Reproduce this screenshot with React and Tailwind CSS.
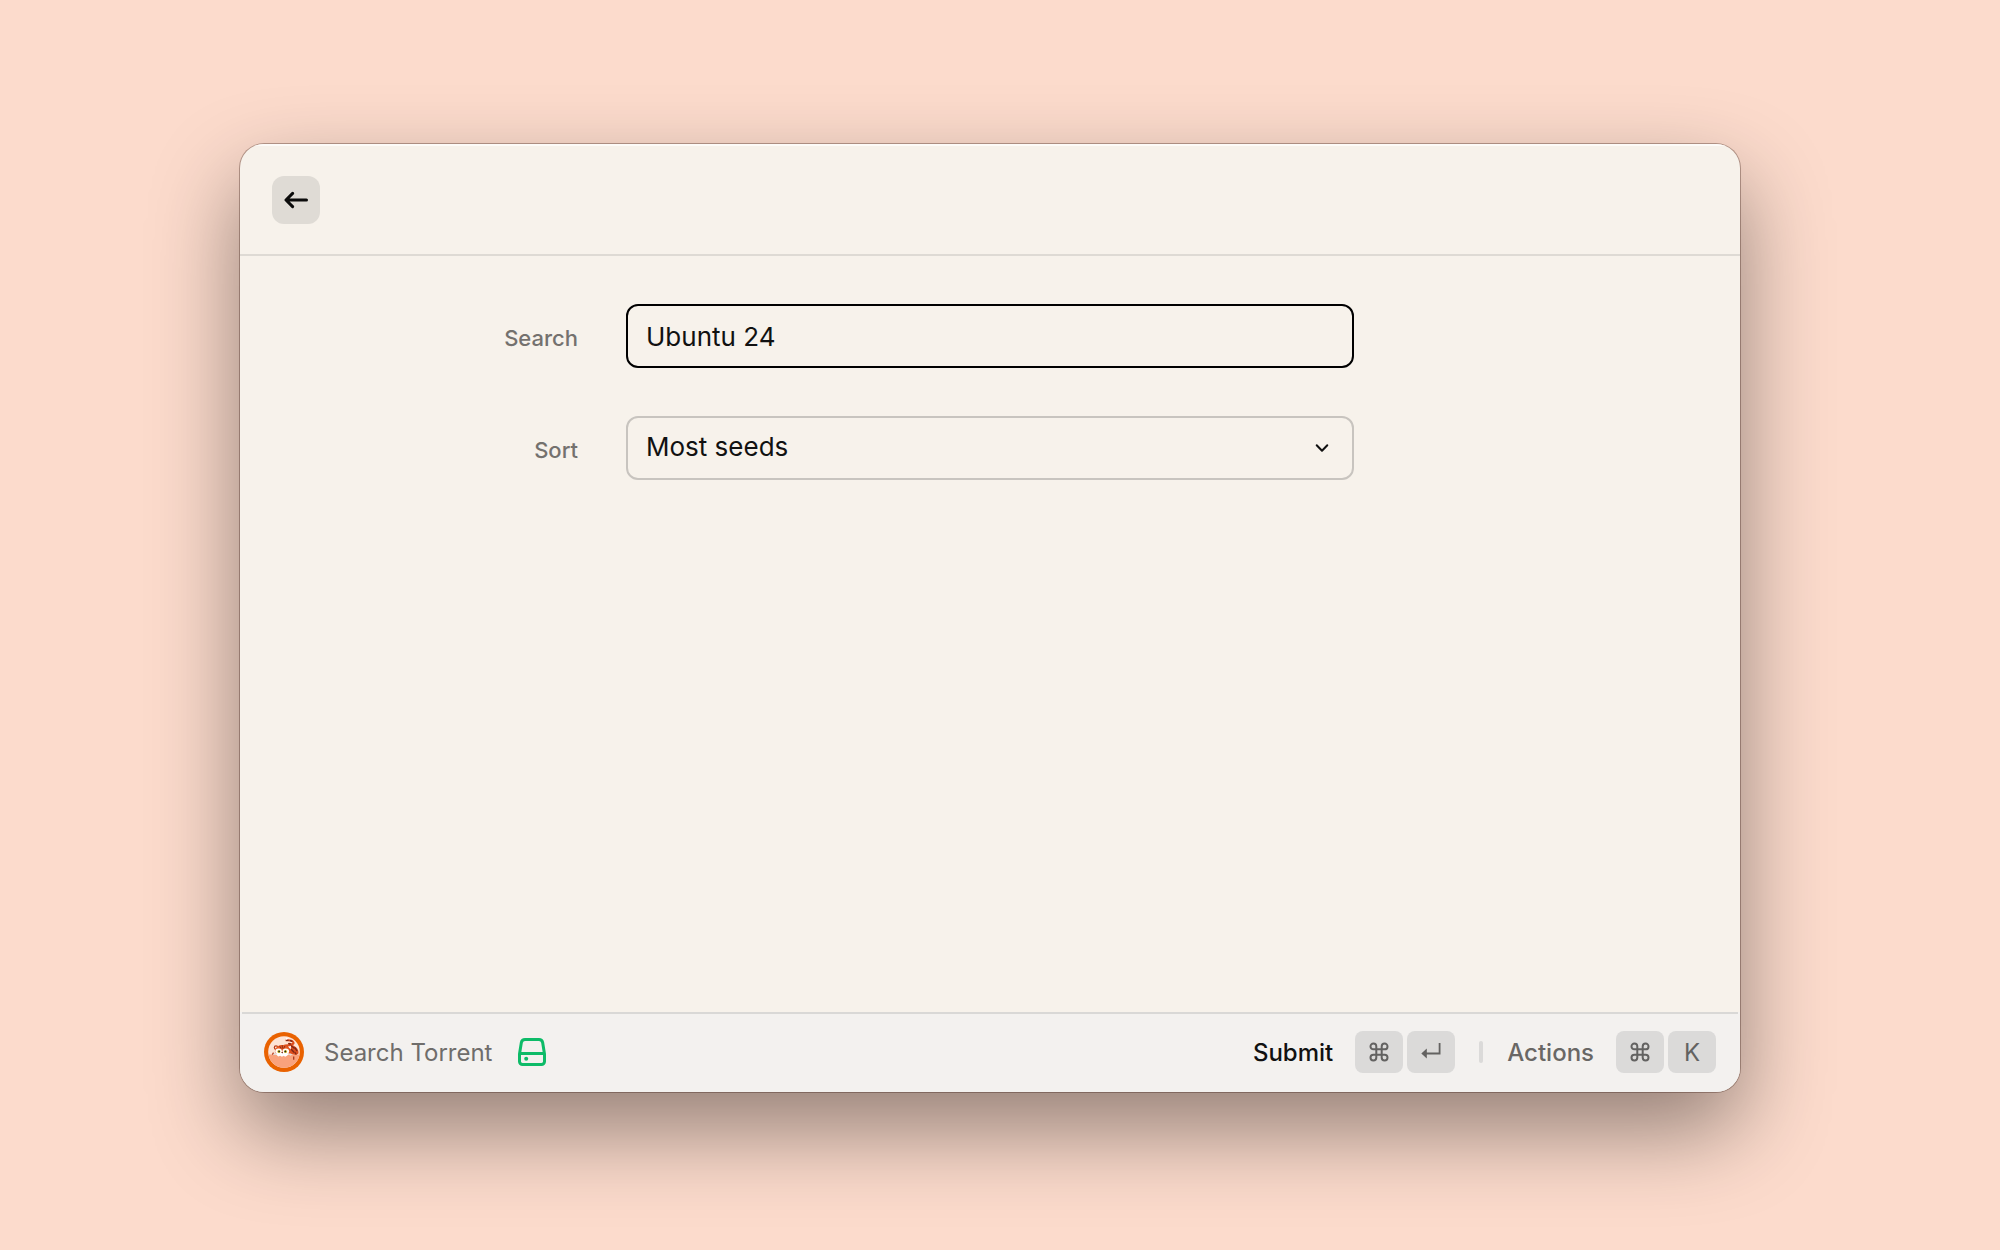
const fontStack = "font-['Inter','Liberation_Sans',sans-serif]";

function ArrowIcon() {
  return (
    <svg viewBox="0 0 24 24" className="size-6" fill="none" stroke="#0b0b0b" strokeWidth="3" strokeLinecap="round" strokeLinejoin="round" aria-hidden="true">
      <path d="M8.6 5.4 2 12l6.6 6.6M2.5 12h20" />
    </svg>
  );
}

function DriveIcon() {
  return (
    <svg viewBox="0 0 28 28" className="size-7" fill="none" stroke="#0dbb68" strokeWidth="3" strokeLinejoin="round" aria-hidden="true">
      <path d="M7 1.5h14c1.8 0 3.2 1 3.6 2.8L26.5 16v7.5a3 3 0 0 1-3 3h-19a3 3 0 0 1-3-3V16L3.4 4.3C3.8 2.5 5.2 1.5 7 1.5Z" />
      <path d="M1.5 15.5h25" />
      <circle cx="8.2" cy="20.700" r="2" fill="#0dbb68" stroke="none" />
    </svg>
  );
}

function TigerIcon() {
  return (
    <svg viewBox="0 0 40 40" className="size-10" aria-hidden="true">
      <circle cx="20" cy="20" r="20" fill="#e96200" />
      <circle cx="20" cy="20" r="15.800" fill="#fde4d6" />
      <path d="M4.400 22.500h31.200a15.800 15.800 0 0 1-31.200 0Z" fill="#f9a27c" />
      <path d="M18 13.500c4-1.500 8-1.600 11.500 0 3 1.500 5.500 4.500 5 8l-2.500 1.500-7-1.500Z" fill="#dc4d1c" />
      <path d="M22.500 8.300c3.500-.3 6.300.6 7 2.400.4 1.300-1.500 2-4.500 1" fill="none" stroke="#dc4d1c" strokeWidth="2" strokeLinecap="round" />
      <path d="M22.500 8.300h1.500M26.500 8.600l1.500.7M24.800 11.600l1.500.4M27.500 14l2.500 2M31 15.800l1.800 2.800M27.500 17.500l2.200 2.500M31 20.500l1 1.500" fill="none" stroke="#7a2619" strokeWidth="1.300" strokeLinecap="round" />
      <path d="M21.600 5.200 24 6.500 22.500 8.200Z" fill="#fff" />
      <circle cx="12" cy="15.600" r="1.700" fill="#fde4d6" stroke="#b83a17" strokeWidth="1.200" />
      <path d="M11 18.500c1-4 4-5.500 7.200-5.500s6.500 1.500 7.300 5.500c.4 2.500-2 4.500-7.300 4.500s-7.800-2-7.200-4.500Z" fill="#e85a22" />
      <path d="M24 14.500 27 14l-.3 3.500Z" fill="#fff" />
      <path d="M15.800 14.300l.9 1.700M18.300 13.600v2.600M20.800 14.300l-.9 1.700" stroke="#7a2619" strokeWidth=".9" strokeLinecap="round" />
      <ellipse cx="14.600" cy="19.300" rx="3.300" ry="2.800" fill="#fff" />
      <ellipse cx="21.800" cy="19.300" rx="3.300" ry="2.800" fill="#fff" />
      <circle cx="14.900" cy="19.400" r="1.500" fill="#d6c01e" />
      <circle cx="21.500" cy="19.400" r="1.500" fill="#d6c01e" />
      <circle cx="15.100" cy="19.400" r=".9" fill="#222" />
      <circle cx="21.300" cy="19.400" r=".9" fill="#222" />
      <path d="M11.500 21.800c1.500-.6 4-.8 6.700-.8s5.300.2 6.800.8l-2 2-1.700.9-1.800-.9-1.500 1-1.800-1-2 .6Z" fill="#fff" />
      <path d="M17.300 20.300h1.900l-1 1.200Z" fill="#542020" />
      <path d="M8.300 22.800c.3-1.600 1.700-2.300 3.200-1.500l1.200 1.800ZM24.500 22.300c1-1.300 2.800-1.200 3.800.3l-1.800 1.200Z" fill="#e3d8d2" />
      <path d="M8.300 22.600 9.500 20.600" stroke="#b83a17" strokeWidth="1.200" />
      <path d="M29.700 24.500v3.300" stroke="#a8381b" strokeWidth="1.300" />
    </svg>
  );
}

function CommandIcon() {
  return (
    <svg viewBox="0 0 20 20" className="size-5" fill="none" stroke="#636261" strokeWidth="2" aria-hidden="true">
      <path d="M7.300 7.300H4.400A2.900 2.900 0 1 1 7.300 4.400V15.600A2.900 2.900 0 1 1 4.400 12.700H15.600A2.900 2.900 0 1 1 12.700 15.600V4.400A2.900 2.900 0 1 1 15.600 7.300Z" />
    </svg>
  );
}

function ReturnIcon() {
  return (
    <svg viewBox="0 0 20 20" className="size-5" aria-hidden="true">
      <path d="M18.600 1v10.500H5" fill="none" stroke="#636261" strokeWidth="1.800" />
      <path d="M.3 11.500 5.800 6.500v10Z" fill="#636261" />
    </svg>
  );
}

function Key({ children }) {
  return (
    <kbd className="flex h-[42px] min-w-12 items-center justify-center rounded-lg bg-[#dbdad9] px-[14px] font-[inherit] text-2xl font-normal text-[#636261]">
      {children}
    </kbd>
  );
}

function Action({ label, tone, children }) {
  return (
    <button type="button" className={`flex items-center gap-[22px] text-2xl font-medium ${tone}`}>
      <span className="pt-0.5">{label}</span>
      <span className="flex gap-1">{children}</span>
    </button>
  );
}

export default function App() {
  return (
    <div className={`flex min-h-screen flex-col bg-[#fcdbcc] pt-36 pr-[260px] pb-[158px] pl-60 ${fontStack}`}>
      <main className="flex flex-1 flex-col overflow-hidden rounded-3xl bg-[#f7f2eb] shadow-[0_0_0_1px_rgba(60,30,20,0.35),0_38px_88px_rgba(0,0,0,0.42)]">
        <header className="border-b-2 border-[#dedad4] px-8 pt-8 pb-[30px] shadow-[inset_0_2px_0_#fdfbf8]">
          <button type="button" aria-label="Back" className="flex size-12 items-center justify-center rounded-xl bg-[#dfdbd5]">
            <ArrowIcon />
          </button>
        </header>

        <form className="grid flex-1 grid-cols-[1fr_minmax(0,728px)_1fr] content-start items-center gap-12 pt-12">
          <label htmlFor="search" className="pt-1 text-right text-[22px] font-medium text-[#74716e]">Search</label>
          <input
            id="search"
            type="text"
            defaultValue="Ubuntu 24"
            className="h-16 w-full rounded-xl border-2 border-black bg-transparent px-[18px] text-[26px] text-[#111] outline-none"
          />
          <span />
          <label htmlFor="sort" className="pt-1 text-right text-[22px] font-medium text-[#74716e]">Sort</label>
          <div className="relative">
            <select
              id="sort"
              className="block h-16 w-full appearance-none rounded-xl border-2 border-[#c8c4bf] bg-transparent px-[18px] pb-[3px] text-[26px] text-[#111] outline-none"
            >
              <option>Most seeds</option>
            </select>
            <svg viewBox="0 0 16 16" className="pointer-events-none absolute top-6 right-6 size-4" fill="none" stroke="#111" strokeWidth="2" strokeLinecap="round" strokeLinejoin="round" aria-hidden="true">
              <path d="m2.700 5.200 5.300 5.600 5.300-5.600" />
            </svg>
          </div>
        </form>

        <footer className="bg-[#f3f1ef]">
          <div className="mx-0.5 flex items-center justify-between border-t-2 border-[#d9d8d6] px-[22px] pt-[17px] pb-[19px]">
            <div className="flex items-center">
              <TigerIcon />
              <span className="ml-5 pt-0.5 text-2xl text-[#6f6d6b]">Search Torrent</span>
              <span className="ml-[26px]">
                <DriveIcon />
              </span>
            </div>
            <div className="flex items-center gap-6">
              <Action label="Submit" tone="text-[#111]">
                <Key><CommandIcon /></Key>
                <Key><ReturnIcon /></Key>
              </Action>
              <span className="h-[22px] w-1 rounded-full bg-[#dbdad9]" />
              <Action label="Actions" tone="text-[#696765]">
                <Key><CommandIcon /></Key>
                <Key><span className="pt-0.5">K</span></Key>
              </Action>
            </div>
          </div>
        </footer>
      </main>
    </div>
  );
}
